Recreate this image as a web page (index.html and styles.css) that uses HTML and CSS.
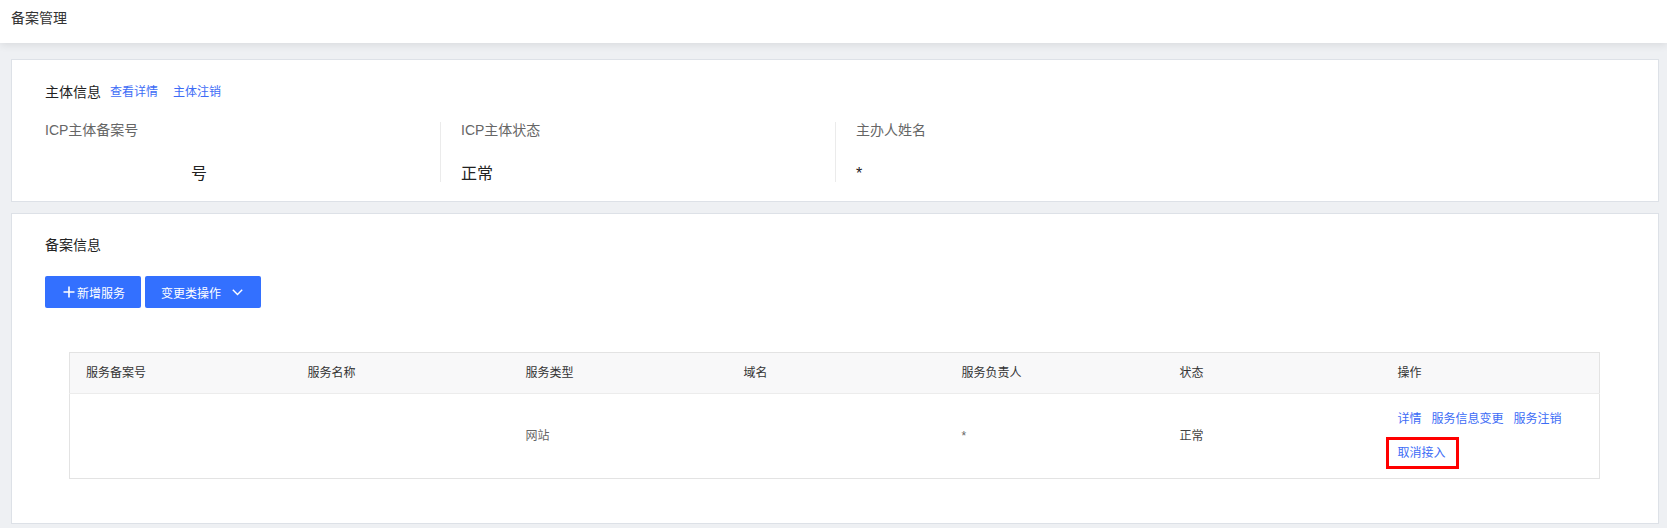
FILE: index.html
```html
<!DOCTYPE html>
<html lang="zh-CN">
<head>
<meta charset="utf-8">
<title>备案管理</title>
<link rel="stylesheet" href="styles.css">
</head>
<body>
<header class="topbar">
  <div class="topbar-title">备案管理</div>
</header>
<main class="content">
  <section class="card">
    <div class="card-title">
      <span class="title-text">主体信息</span>
      <a class="link title-link">查看详情</a>
      <a class="link title-link second">主体注销</a>
    </div>
    <div class="info-grid">
      <div class="info-col">
        <div class="info-label">ICP主体备案号</div>
        <div class="info-value"><span class="masked"></span>号</div>
      </div>
      <div class="info-col bordered">
        <div class="info-label">ICP主体状态</div>
        <div class="info-value">正常</div>
      </div>
      <div class="info-col bordered">
        <div class="info-label">主办人姓名</div>
        <div class="info-value">*</div>
      </div>
      <div class="info-col"></div>
    </div>
  </section>

  <section class="card card-records">
    <div class="card-title"><span class="title-text">备案信息</span></div>
    <div class="toolbar">
      <button class="btn btn-add">
        <svg class="icon-plus" width="12" height="12" viewBox="0 0 12 12"><path d="M6 0.5V11.5M0.5 6H11.5" stroke="#fff" stroke-width="1.6" fill="none"/></svg>
        <span>新增服务</span>
      </button>
      <button class="btn btn-change">
        <span>变更类操作</span>
        <svg class="icon-chevron" width="11" height="7" viewBox="0 0 11 7"><path d="M0.8 0.8L5.5 5.6L10.2 0.8" stroke="#fff" stroke-width="1.4" fill="none"/></svg>
      </button>
    </div>
    <div class="table-wrap">
      <table class="table">
        <colgroup>
          <col class="col-first">
          <col><col><col><col><col><col>
        </colgroup>
        <thead>
          <tr>
            <th>服务备案号</th>
            <th>服务名称</th>
            <th>服务类型</th>
            <th>域名</th>
            <th>服务负责人</th>
            <th>状态</th>
            <th>操作</th>
          </tr>
        </thead>
        <tbody>
          <tr>
            <td></td>
            <td></td>
            <td class="muted">网站</td>
            <td></td>
            <td class="muted">*</td>
            <td class="dark">正常</td>
            <td>
              <div class="ops">
                <a class="link">详情</a>
                <a class="link">服务信息变更</a>
                <a class="link">服务注销</a>
                <a class="link highlighted">取消接入</a>
              </div>
            </td>
          </tr>
        </tbody>
      </table>
    </div>
  </section>
</main>
</body>
</html>
```

FILE: styles.css
```css
html, body {
  margin: 0;
  padding: 0;
}
body {
  background: #eef0f3;
  font-family: "Liberation Sans", "Noto Sans CJK SC", sans-serif;
  color: #333;
  width: 1667px;
  height: 528px;
  overflow: hidden;
}
.topbar {
  height: 43px;
  background: #fff;
  box-shadow: 0 2px 8px rgba(0, 0, 0, 0.09);
  position: relative;
  z-index: 1;
  box-sizing: border-box;
  padding: 8px 0 0 11px;
}
.topbar-title {
  font-size: 14px;
  line-height: 20px;
  color: #333;
}
.content {
  padding: 16px 8px 0 11px;
  display: flex;
  flex-direction: column;
  gap: 11px;
}
.card {
  background: #fff;
  border: 1px solid #dde1e7;
  padding: 22px 33px 19px 33px;
}
.card-records {
  padding-top: 21px;
  padding-bottom: 44px;
}
.card-title {
  display: flex;
  align-items: center;
  height: 20px;
  font-size: 14px;
  line-height: 20px;
}
.title-text {
  color: #222;
}
.link {
  color: #3d6cf6;
  font-size: 12px;
  line-height: 16px;
  cursor: pointer;
}
.title-link {
  margin-left: 9px;
}
.title-link.second {
  margin-left: 15px;
}
.info-grid {
  margin-top: 20px;
  display: grid;
  grid-template-columns: repeat(4, 1fr);
}
.info-col {
  height: 60px;
  display: flex;
  flex-direction: column;
  justify-content: space-between;
}
.info-col.bordered {
  border-left: 1px solid #ebebeb;
  padding-left: 20px;
}
.info-label {
  font-size: 14px;
  line-height: 16px;
  color: #666;
}
.info-value {
  font-size: 16px;
  line-height: 16px;
  color: #222;
}
.masked {
  display: inline-block;
  width: 146px;
}
.toolbar {
  margin-top: 21px;
  display: flex;
  gap: 4px;
}
.btn {
  height: 32px;
  border: none;
  border-radius: 2px;
  background: #3370ff;
  color: #fff;
  font-family: inherit;
  font-size: 12px;
  display: flex;
  align-items: center;
  padding: 0;
  cursor: pointer;
}
.btn-add {
  width: 96px;
  padding-left: 18px;
}
.icon-plus {
  margin-right: 2px;
}
.btn-change {
  width: 116px;
  padding-left: 16px;
}
.icon-chevron {
  margin-left: 11px;
}
.table-wrap {
  margin: 44px 25px 0 24px;
}
.table {
  width: 100%;
  border-collapse: collapse;
  table-layout: fixed;
  border: 1px solid #e3e3e3;
  font-size: 12px;
}
.col-first {
  width: 222px;
}
.table th {
  background: #f8f8f9;
  font-weight: normal;
  text-align: left;
  color: #333;
  padding: 12px 16px;
  line-height: 16px;
  border-bottom: 1px solid #ececec;
}
.table td {
  padding: 17px 16px;
  line-height: 16px;
  vertical-align: middle;
  color: #666;
  border-bottom: 1px solid #e3e3e3;
}
.table td.dark {
  color: #444;
}
.ops {
  display: flex;
  flex-wrap: wrap;
  column-gap: 10px;
  row-gap: 18px;
}
.highlighted {
  position: relative;
}
.highlighted::after {
  content: "";
  position: absolute;
  left: -12px;
  right: -13px;
  top: -8px;
  bottom: -8px;
  border: 3px solid #ff0000;
}
```
